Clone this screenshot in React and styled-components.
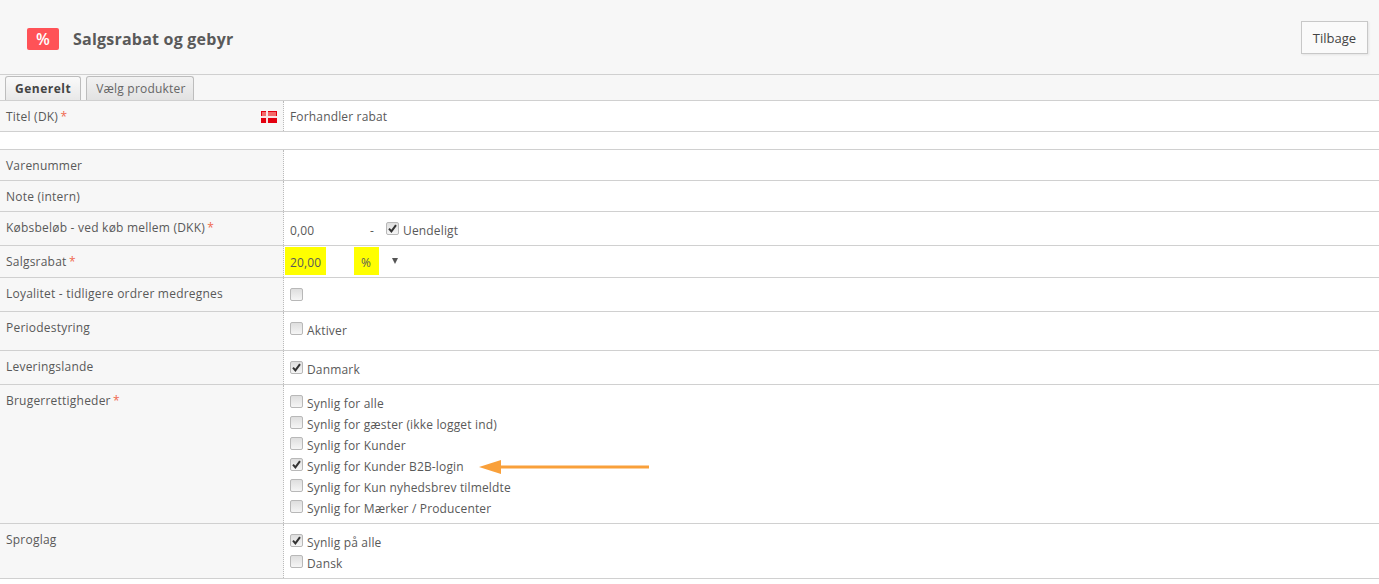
import React from "react"
import styled, { createGlobalStyle } from "styled-components"

const rights = [
  ["Synlig for alle", false],
  ["Synlig for gæster (ikke logget ind)", false],
  ["Synlig for Kunder", false],
  ["Synlig for Kunder B2B-login", true],
  ["Synlig for Kun nyhedsbrev tilmeldte", false],
  ["Synlig for Mærker / Producenter", false],
]

const Check = ({ checked }) => (
  <CheckBox>
    {checked && (
      <svg width="9" height="9" viewBox="0 0 9 9">
        <path d="M1 4.6 L3.4 7.4 L8 1.2" fill="none" stroke="#333" strokeWidth="2" />
      </svg>
    )}
  </CheckBox>
)

const Option = ({ checked, children }) => (
  <OptionRow>
    <Check checked={checked} />
    <span>{children}</span>
  </OptionRow>
)

const App = () => {
  return (
    <Page>
      <GlobalStyle />
      <Header>
        <TitleGroup>
          <Badge>%</Badge>
          <Title>Salgsrabat og gebyr</Title>
        </TitleGroup>
        <BackButton>Tilbage</BackButton>
      </Header>
      <Tabs>
        <Tab $active>Generelt</Tab>
        <Tab>Vælg produkter</Tab>
      </Tabs>

      <Row $height={31}>
        <Label $flag>
          <span>Titel (DK) <Star>*</Star></span>
          <Flag viewBox="0 0 16 12">
            <rect width="16" height="12" fill="#e3000f" />
            <rect x="1" y="1" width="14" height="4" fill="#f36a6a" />
            <rect x="0" y="5" width="16" height="2" fill="#f8e4e4" />
            <rect x="5" y="0" width="2" height="12" fill="#f8e4e4" />
          </Flag>
        </Label>
        <Value $top={7}>Forhandler rabat</Value>
      </Row>
      <Spacer />
      <Row $height={31}>
        <Label>Varenummer</Label>
        <Value />
      </Row>
      <Row $height={31}>
        <Label>Note (intern)</Label>
        <Value />
      </Row>
      <Row $height={34}>
        <Label>Købsbeløb - ved køb mellem (DKK) <Star>*</Star></Label>
        <Value $top={8}>
          <AmountLine>
            <Amount>0,00</Amount>
            <Dash>-</Dash>
            <Option checked>Uendeligt</Option>
          </AmountLine>
        </Value>
      </Row>
      <Row $height={32}>
        <Label>Salgsrabat <Star>*</Star></Label>
        <Value $top={1}>
          <DiscountLine>
            <Marked $width={41}>20,00</Marked>
            <Marked $width={25} $gap={28}>%</Marked>
            <Caret />
          </DiscountLine>
        </Value>
      </Row>
      <Row $height={34}>
        <Label>Loyalitet - tidligere ordrer medregnes</Label>
        <Value $top={10}>
          <Check />
        </Value>
      </Row>
      <Row $height={39}>
        <Label>Periodestyring</Label>
        <Value $top={8}>
          <Option>Aktiver</Option>
        </Value>
      </Row>
      <Row $height={34}>
        <Label>Leveringslande</Label>
        <Value $top={8}>
          <Option checked>Danmark</Option>
        </Value>
      </Row>
      <Row $height={139}>
        <Label>Brugerrettigheder <Star>*</Star></Label>
        <Value $top={8}>
          {rights.map(([text, checked]) => (
            <ArrowAnchor key={text}>
              <Option checked={checked}>{text}</Option>
              {checked && (
                <Arrow width="172" height="16" viewBox="0 0 172 16">
                  <path d="M22 8 H171" stroke="#f9a03a" strokeWidth="3" />
                  <path d="M1 8 L23 1 V15 Z" fill="#f9a03a" />
                </Arrow>
              )}
            </ArrowAnchor>
          ))}
        </Value>
      </Row>
      <Row $height={55}>
        <Label>Sproglag</Label>
        <Value $top={8}>
          <Option checked>Synlig på alle</Option>
          <Option>Dansk</Option>
        </Value>
      </Row>
    </Page>
  )
}

export default App

const GlobalStyle = createGlobalStyle`
  html, body {
    margin: 0;
    background: #fff;
    overflow: hidden;
  }
  * {
    box-sizing: border-box;
  }
`

const Page = styled.div`
  width: 1379px;
  height: 584px;
  font-family: "Open Sans", sans-serif;
  font-size: 12px;
  letter-spacing: 0.16px;
  color: #595959;
`

const Header = styled.div`
  height: 75px;
  background: #f7f7f7;
  border-bottom: 1px solid #d0d0d0;
  display: flex;
  align-items: center;
  justify-content: space-between;
  padding: 0 11px 1px 27px;
`

const TitleGroup = styled.div`
  display: flex;
  align-items: center;
  gap: 14px;
  margin-top: 4px;
`

const Badge = styled.div`
  width: 32px;
  height: 22px;
  border-radius: 2px;
  background: #ff5257;
  color: #fff;
  font-size: 16px;
  font-weight: 600;
  line-height: 22px;
  text-align: center;
`

const Title = styled.h1`
  margin: 0;
  font-size: 16px;
  font-weight: 700;
  letter-spacing: 0.22px;
  color: #5a5a5a;
`

const BackButton = styled.button`
  width: 67px;
  height: 33px;
  margin-top: 2px;
  background: #fafafa;
  border: 1px solid #c8c8c8;
  box-shadow: 1px 1px 2px rgba(0, 0, 0, 0.08);
  font: 13px "Open Sans", sans-serif;
  color: #444;
  padding: 0;
`

const Tabs = styled.div`
  height: 26px;
  background: #f7f7f7;
  border-bottom: 1px solid #d0d0d0;
  display: flex;
  align-items: flex-end;
  gap: 5px;
  padding-left: 5px;
`

const Tab = styled.div`
  height: 24px;
  padding: 0 ${p => (p.$active ? 9 : 7)}px 0 9px;
  border: 1px solid #bdbdbd;
  border-bottom: 0;
  border-radius: 3px 3px 0 0;
  background: ${p => (p.$active ? "linear-gradient(#fafafa, #e8e8e8)" : "linear-gradient(#f2f2f2, #e2e2e2)")};
  font-weight: ${p => (p.$active ? 700 : 400)};
  letter-spacing: ${p => (p.$active ? 0.5 : 0.2)}px;
  color: ${p => (p.$active ? "#444" : "#666")};
  line-height: 23px;
`

const Row = styled.div`
  height: ${p => p.$height}px;
  display: flex;
  border-bottom: 1px solid #d0d0d0;
`

const Label = styled.div`
  width: 284px;
  flex-shrink: 0;
  background: #f7f7f7;
  border-right: 1px dotted #bbb;
  padding: 7px 6px 0 6px;
  line-height: 17px;
  letter-spacing: 0.22px;
  ${p => p.$flag && "display: flex; justify-content: space-between; align-items: flex-start;"}
`

const Star = styled.span`
  color: #f0694f;
  margin-left: -1px;
`

const Flag = styled.svg`
  width: 16px;
  height: 12px;
  margin-top: 3px;
`

const Value = styled.div`
  flex: 1;
  position: relative;
  padding: ${p => p.$top || 0}px 0 0 6px;
  line-height: 17px;
`

const Spacer = styled.div`
  height: 18px;
  border-bottom: 1px solid #d0d0d0;
`

const AmountLine = styled.div`
  display: flex;
  align-items: center;
`

const Amount = styled.span`
  width: 80px;
`

const Dash = styled.span`
  width: 16px;
`

const DiscountLine = styled.div`
  display: flex;
  align-items: center;
  height: 28px;
  margin-left: -5px;
`

const Marked = styled.span`
  width: ${p => p.$width}px;
  height: 28px;
  margin-left: ${p => p.$gap || 0}px;
  background: #ffff00;
  color: #595959;
  line-height: 31px;
  padding-left: ${p => (p.$gap ? 7 : 5)}px;
`

const Caret = styled.span`
  width: 0;
  height: 0;
  margin-left: 13px;
  margin-top: -1px;
  border-left: 3px solid transparent;
  border-right: 3px solid transparent;
  border-top: 6px solid #555;
`

const OptionRow = styled.div`
  display: flex;
  align-items: center;
  gap: 4px;
  height: 21px;
`

const CheckBox = styled.span`
  width: 13px;
  height: 13px;
  margin-top: -5px;
  flex-shrink: 0;
  display: inline-flex;
  align-items: center;
  justify-content: center;
  border: 1px solid #b8b8b8;
  border-radius: 2px;
  background: linear-gradient(#dedede, #f5f5f5);
`

const ArrowAnchor = styled.div`
  position: relative;
`

const Arrow = styled.svg`
  position: absolute;
  left: 188px;
  top: 3px;
`
